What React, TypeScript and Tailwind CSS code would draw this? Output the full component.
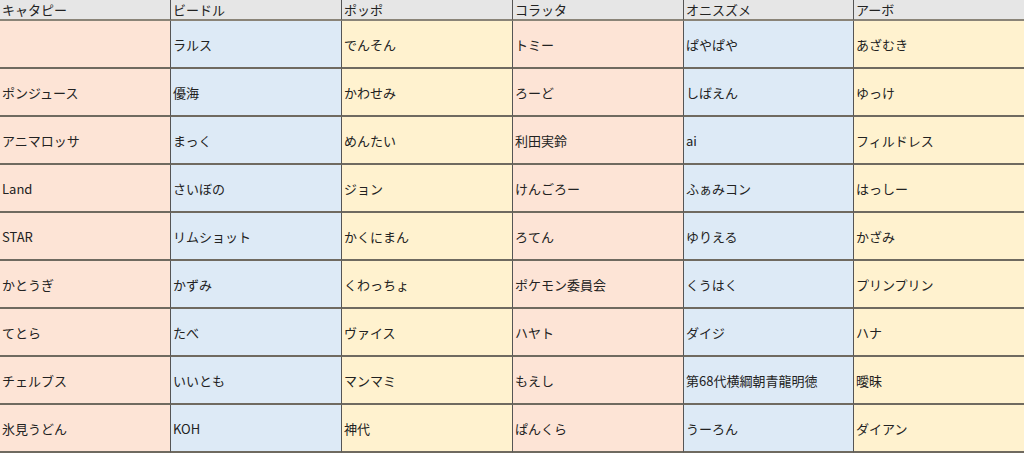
import React from "react";

const headers = ["キャタピー", "ビードル", "ポッポ", "コラッタ", "オニスズメ", "アーボ"];
const rows: string[][] = [
  ["", "ラルス", "でんそん", "トミー", "ぱやぱや", "あざむき"],
  ["ポンジュース", "優海", "かわせみ", "ろーど", "しばえん", "ゆっけ"],
  ["アニマロッサ", "まっく", "めんたい", "利田実鈴", "ai", "フィルドレス"],
  ["Land", "さいぼの", "ジョン", "けんごろー", "ふぁみコン", "はっしー"],
  ["STAR", "リムショット", "かくにまん", "ろてん", "ゆりえる", "かざみ"],
  ["かとうぎ", "かずみ", "くわっちょ", "ポケモン委員会", "くうはく", "プリンプリン"],
  ["てとら", "たべ", "ヴァイス", "ハヤト", "ダイジ", "ハナ"],
  ["チェルブス", "いいとも", "マンマミ", "もえし", "第68代横綱朝青龍明徳", "曖昧"],
  ["氷見うどん", "KOH", "神代", "ぱんくら", "うーろん", "ダイアン"],
];
const colBg = ["bg-[#fde4d6]", "bg-[#ddeaf6]", "bg-[#fff2cf]", "bg-[#fde4d6]", "bg-[#ddeaf6]", "bg-[#fff2cf]"];

export default function App() {
  return (
    <div
      className="w-[1024px] h-[453px] overflow-hidden bg-white text-[13px] text-[#222]"
      style={{ fontFamily: '"Noto Sans CJK JP", "Noto Sans", sans-serif' }}
    >
      <div className="grid grid-cols-[171px_171px_171px_171px_170px_170px]">
        {headers.map((h, i) => (
          <div
            key={i}
            className={`h-[21px] bg-[#e6e6e6] border-b-2 border-b-[#8a8478] pl-[2px] flex items-center leading-none ${i < 5 ? "border-r border-r-[#555]" : ""}`}
          >
            {h}
          </div>
        ))}
        {rows.map((r, ri) =>
          r.map((c, ci) => (
            <div
              key={`${ri}-${ci}`}
              className={`h-[48px] ${colBg[ci]} border-b-2 border-b-[#6f6a60] pl-[2px] flex items-center leading-none ${ci < 5 ? "border-r border-r-[#555]" : ""}`}
            >
              {c}
            </div>
          ))
        )}
      </div>
    </div>
  );
}
